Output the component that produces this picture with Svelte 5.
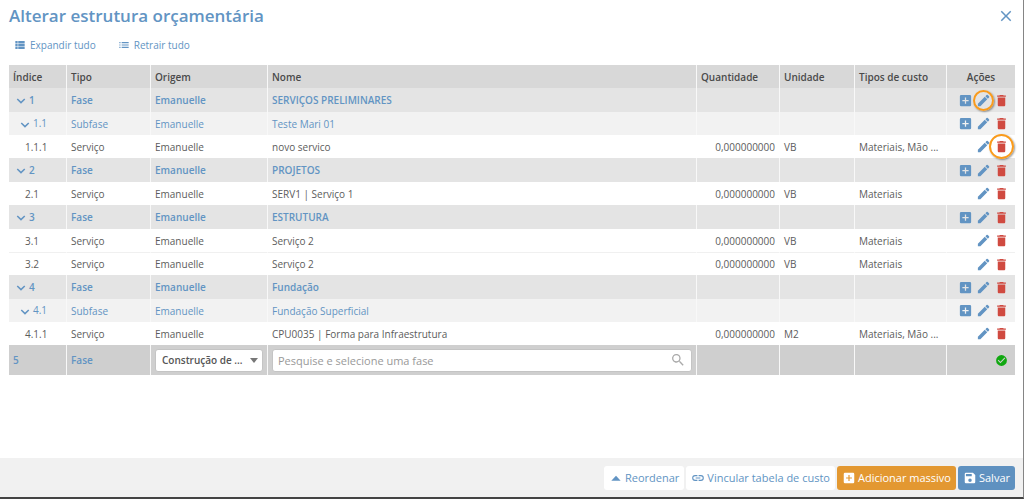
<script>
    const icons = {
        add: 'M19 3H5a2 2 0 0 0-2 2v14a2 2 0 0 0 2 2h14a2 2 0 0 0 2-2V5a2 2 0 0 0-2-2zm-2 10h-4v4h-2v-4H7v-2h4V7h2v4h4v2z',
        edit: 'M3 21v-4L14 6l4 4L7 21zM15 5l1.800-1.800a1.500 1.500 0 0 1 2.100 0l1.900 1.900a1.500 1.500 0 0 1 0 2.100L19 9z',
        trash: 'M6 19c0 1.1.9 2 2 2h8c1.1 0 2-.9 2-2V7H6v12zM19 4h-3.5l-1-1h-5l-1 1H5v2h14V4z',
        check: 'M12 2a10 10 0 1 0 0 20 10 10 0 0 0 0-20zm-2 15l-5-5 1.41-1.41L10 14.17l7.59-7.59L19 8l-9 9z',
        chevron: 'M6.5 7.500L12 13l5.500-5.500L19.300 9.300 12 16.600 4.700 9.300z',
        close: 'M19 6.41L17.59 5 12 10.59 6.41 5 5 6.41 10.59 12 5 17.59 6.41 19 12 13.41 17.59 19 19 17.59 13.41 12z',
        expand: 'M4 5h4v4H4zM9 5h11v4H9zM4 10h4v4H4zM9 10h11v4H9zM4 15h4v4H4zM9 15h11v4H9z',
        collapse: 'M4 13h2v-2H4v2zm0 4h2v-2H4v2zm0-8h2V7H4v2zm4 4h12v-2H8v2zm0 4h12v-2H8v2zM8 7v2h12V7H8z',
        up: 'M4 16.5h16L12 8z',
        link: 'M3.9 12c0-1.71 1.39-3.1 3.1-3.1h4V7H7a5 5 0 0 0 0 10h4v-1.9H7A3.1 3.1 0 0 1 3.9 12zM8 13h8v-2H8v2zm9-6h-4v1.9h4a3.1 3.1 0 0 1 0 6.2h-4V17h4a5 5 0 0 0 0-10z',
        save: 'M17 3H5a2 2 0 0 0-2 2v14a2 2 0 0 0 2 2h14a2 2 0 0 0 2-2V7l-4-4zm-5 16a3 3 0 1 1 0-6 3 3 0 0 1 0 6zm3-10H5V5h10v4z',
        search: 'M15.5 14h-.79l-.28-.27a6.5 6.5 0 1 0-.7.7l.27.28v.79l5 4.99L20.49 19l-4.99-5zm-6 0a4.5 4.5 0 1 1 0-9 4.5 4.5 0 0 1 0 9z'
    }

    const rows = [
        { indice: '1', tipo: 'Fase', nome: 'SERVIÇOS PRELIMINARES', marca: 'edit' },
        { indice: '1.1', tipo: 'Subfase', nome: 'Teste Mari 01' },
        { indice: '1.1.1', tipo: 'Serviço', nome: 'novo servico', unidade: 'VB', custo: 'Materiais, Mão ...', marca: 'trash' },
        { indice: '2', tipo: 'Fase', nome: 'PROJETOS' },
        { indice: '2.1', tipo: 'Serviço', nome: 'SERV1 | Serviço 1', unidade: 'VB', custo: 'Materiais' },
        { indice: '3', tipo: 'Fase', nome: 'ESTRUTURA' },
        { indice: '3.1', tipo: 'Serviço', nome: 'Serviço 2', unidade: 'VB', custo: 'Materiais' },
        { indice: '3.2', tipo: 'Serviço', nome: 'Serviço 2', unidade: 'VB', custo: 'Materiais' },
        { indice: '4', tipo: 'Fase', nome: 'Fundação' },
        { indice: '4.1', tipo: 'Subfase', nome: 'Fundação Superficial' },
        { indice: '4.1.1', tipo: 'Serviço', nome: 'CPU0035 | Forma para Infraestrutura', unidade: 'M2', custo: 'Materiais, Mão ...' }
    ]

    const classes = { 'Fase': 'fase', 'Subfase': 'subfase', 'Serviço': 'servico' }

    let busca = $state('')
</script>

{#snippet icon(name)}
    <svg class="icon" viewBox="0 0 24 24" aria-hidden="true"><path d={icons[name]} /></svg>
{/snippet}

<main>
    <header>
        <h1>Alterar estrutura orçamentária</h1>
        <button class="close" aria-label="Fechar">{@render icon('close')}</button>
    </header>

    <div class="toolbar">
        <button>{@render icon('expand')}Expandir tudo</button>
        <button>{@render icon('collapse')}Retrair tudo</button>
    </div>

    <div class="content">
        <table>
            <colgroup>
                <col class="c-indice"><col class="c-tipo"><col class="c-origem"><col>
                <col class="c-quantidade"><col class="c-unidade"><col class="c-custo"><col class="c-acoes">
            </colgroup>
            <thead>
                <tr>
                    <th>Índice</th>
                    <th>Tipo</th>
                    <th>Origem</th>
                    <th>Nome</th>
                    <th>Quantidade</th>
                    <th>Unidade</th>
                    <th>Tipos de custo</th>
                    <th class="center">Ações</th>
                </tr>
            </thead>
            <tbody>
                {#each rows as row}
                    <tr class={classes[row.tipo]}>
                        <td class="indice">
                            {#if row.tipo != 'Serviço'}
                                <button class="toggle" aria-label="Retrair">{@render icon('chevron')}</button>
                            {/if}{row.indice}
                        </td>
                        <td>{row.tipo}</td>
                        <td>Emanuelle</td>
                        <td>{row.nome}</td>
                        <td class="right">{row.unidade ? '0,000000000' : ''}</td>
                        <td>{row.unidade ?? ''}</td>
                        <td>{row.custo ?? ''}</td>
                        <td>
                            <div class="actions">
                                {#if row.tipo != 'Serviço'}
                                    <button aria-label="Adicionar">{@render icon('add')}</button>
                                {/if}
                                <button class:marked={row.marca == 'edit'} aria-label="Editar">{@render icon('edit')}</button>
                                <button class="trash" class:marked={row.marca == 'trash'} aria-label="Excluir">{@render icon('trash')}</button>
                            </div>
                        </td>
                    </tr>
                {/each}
                <tr class="nova">
                    <td>5</td>
                    <td>Fase</td>
                    <td>
                        <div class="select">
                            <select aria-label="Origem">
                                <option>Construção de ...</option>
                            </select>
                            <svg class="caret" viewBox="0 0 8 5" aria-hidden="true"><path d="M0 0h8L4 5z" /></svg>
                        </div>
                    </td>
                    <td>
                        <div class="search">
                            <input type="text" aria-label="Nome" placeholder="Pesquise e selecione uma fase" bind:value={busca}>
                            {@render icon('search')}
                        </div>
                    </td>
                    <td></td>
                    <td></td>
                    <td></td>
                    <td>
                        <div class="actions">
                            <button class="confirm" aria-label="Confirmar">{@render icon('check')}</button>
                        </div>
                    </td>
                </tr>
            </tbody>
        </table>
    </div>

    <footer>
        <button>{@render icon('up')}Reordenar</button>
        <button>{@render icon('link')}Vincular tabela de custo</button>
        <button class="orange">{@render icon('add')}Adicionar massivo</button>
        <button class="blue">{@render icon('save')}Salvar</button>
    </footer>
</main>

<style>
    :global(body) {
        background: #fff;
    }

    main {
        box-sizing: border-box;
        min-height: 100vh;
        display: flex;
        flex-direction: column;
        border-right: 1px solid #858585;
        border-bottom: 2px solid #444;
        font-family: "Open Sans", sans-serif;
        font-size: 10px;
        color: #5c5c5c;
    }

    button {
        display: flex;
        align-items: center;
        padding: 0;
        border: none;
        background: none;
        color: #6294c3;
        font-family: inherit;
        font-size: inherit;
        font-weight: inherit;
        cursor: pointer;
    }

    .icon {
        display: block;
        flex: none;
        width: 14px;
        height: 14px;
        fill: currentColor;
    }

    header {
        display: flex;
        align-items: center;
        justify-content: space-between;
        height: 32px;
        padding: 0 8px 0 9px;
    }

    h1 {
        margin: 0;
        font-size: 17px;
        line-height: 24px;
        font-weight: 650;
        color: #6294c3;
    }

    .close .icon {
        width: 18px;
        height: 18px;
    }

    .toolbar {
        display: flex;
        gap: 21px;
        height: 26px;
        padding: 0 13px 7px;
    }

    .toolbar button {
        gap: 3px;
    }

    .content {
        flex: 1;
        padding: 0 8px 0 9px;
    }

    table {
        width: 100%;
        table-layout: fixed;
        border-collapse: separate;
        border-spacing: 0;
    }

    .c-indice { width: 58px; }
    .c-tipo { width: 84px; }
    .c-origem { width: 117px; }
    .c-quantidade { width: 83px; }
    .c-unidade { width: 75px; }
    .c-custo { width: 92px; }
    .c-acoes { width: 68px; }

    th, td {
        box-sizing: border-box;
        height: 23px;
        padding: 0 4px;
        border-right: 1px solid #f8f8f8;
        line-height: 16px;
        text-align: left;
        white-space: nowrap;
    }

    th:last-child, td:last-child {
        border-right: none;
    }

    th {
        background: #d8d8d8;
        font-weight: 600;
        color: #4a4a4a;
    }

    th.center {
        text-align: center;
    }

    td.right {
        text-align: right;
    }

    .fase td {
        height: 24px;
        background: #e4e4e4;
        color: #6294c3;
        font-weight: 600;
    }

    .subfase td {
        background: #f2f2f2;
        color: #6294c3;
    }

    .servico td {
        border-right-color: #fff;
    }

    .servico + .servico td {
        border-top: 1px solid #f0f0f0;
    }

    .indice {
        padding-left: 5px;
    }

    .subfase .indice {
        padding-left: 9px;
    }

    .servico .indice {
        padding-left: 16px;
    }

    .toggle {
        display: inline-flex;
        margin-right: 1px;
        vertical-align: middle;
    }

    .actions {
        display: flex;
        justify-content: flex-end;
        gap: 3px;
        padding-right: 2px;
    }

    .actions button {
        position: relative;
    }

    .actions .icon {
        width: 15px;
        height: 15px;
    }

    .actions .trash {
        color: #d04a40;
    }

    .actions .confirm {
        color: #10a810;
    }

    .confirm .icon {
        padding: 1px;
        box-sizing: border-box;
    }

    .marked::after {
        content: "";
        position: absolute;
        inset: -3px;
        border: 2px solid #f99b1c;
        border-radius: 50%;
        box-shadow: 1px 1px 2px rgba(0, 0, 0, 0.4);
    }

    .trash.marked::after {
        inset: -5px;
    }

    .nova td {
        height: 30px;
        background: #cfcfcf;
        color: #6294c3;
        font-weight: 600;
    }

    .select, .search {
        position: relative;
        display: flex;
        align-items: center;
        box-sizing: border-box;
        height: 23px;
        border: 1px solid #c4c4c4;
        border-radius: 3px;
        background: #fff;
    }

    select, input {
        appearance: none;
        width: 100%;
        height: 100%;
        margin: 0;
        padding: 0 6px;
        border: none;
        outline: none;
        background: none;
        color: #555;
        font-family: inherit;
        font-size: 10px;
        font-weight: 600;
    }

    input {
        padding: 0 5px;
        font-size: 11px;
        font-weight: 400;
    }

    input::placeholder {
        color: #999;
        opacity: 1;
    }

    .caret {
        position: absolute;
        right: 4px;
        width: 8px;
        height: 5px;
        fill: #777;
        pointer-events: none;
    }

    .search .icon {
        width: 16px;
        height: 16px;
        margin-right: 5px;
        color: #aaa;
    }

    footer {
        display: flex;
        align-items: center;
        justify-content: flex-end;
        gap: 2px;
        height: 39px;
        padding: 0 8px;
        background: #f1f1f1;
    }

    footer button {
        gap: 2px;
        height: 24px;
        padding: 0 5px;
        border-radius: 3px;
        background: #fff;
        font-size: 11px;
    }

    footer .orange {
        background: #e39831;
        color: #fff;
    }

    footer .blue {
        background: #5f91c0;
        color: #fff;
    }
</style>
